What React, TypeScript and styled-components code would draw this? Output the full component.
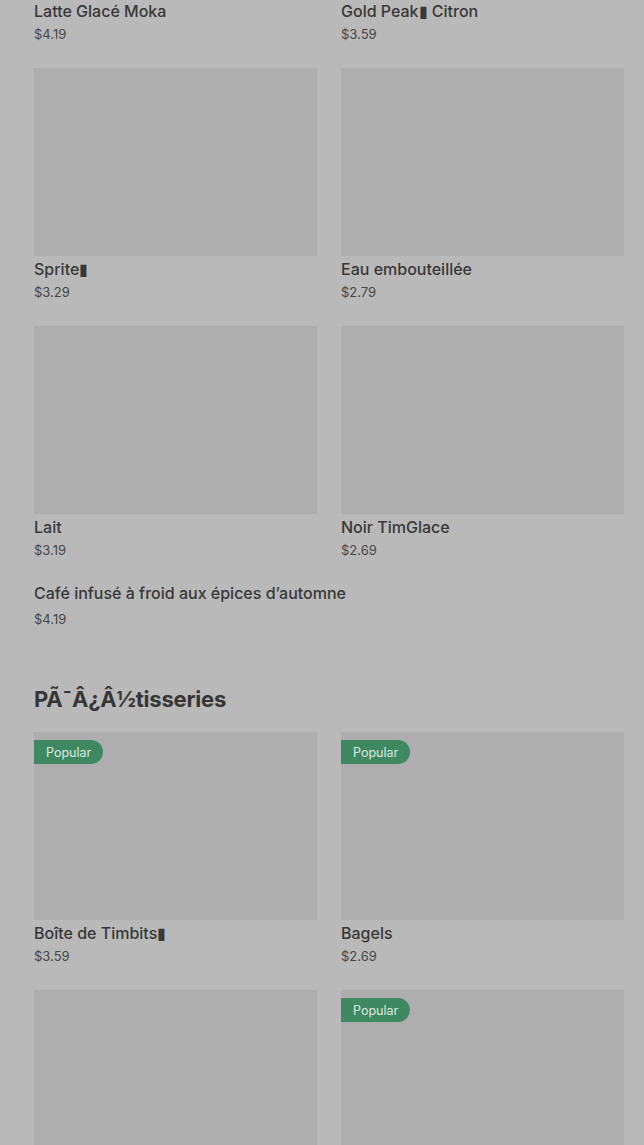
import styled, { createGlobalStyle } from "styled-components";

interface MenuItem {
  name: string;
  price: string;
  image?: boolean;
  popular?: boolean;
}

const drinks: MenuItem[] = [
  { name: "Latte Glacé Moka", price: "$4.19", image: true },
  { name: "Gold Peak▮ Citron", price: "$3.59", image: true },
  { name: "Sprite▮", price: "$3.29", image: true },
  { name: "Eau embouteillée", price: "$2.79", image: true },
  { name: "Lait", price: "$3.19", image: true },
  { name: "Noir TimGlace", price: "$2.69", image: true },
  { name: "Café infusé à froid aux épices d’automne", price: "$4.19" },
];

const pastries: MenuItem[] = [
  { name: "Boîte de Timbits▮", price: "$3.59", image: true, popular: true },
  { name: "Bagels", price: "$2.69", image: true, popular: true },
  { name: "Muffins", price: "$2.19", image: true },
  { name: "Beignes", price: "$1.79", image: true, popular: true },
];

const App = () => {
  return (
    <>
      <GlobalStyle />
      <Page>
        <Grid>
          {drinks.map((item) => (
            <Card key={item.name} item={item} />
          ))}
        </Grid>
        <SectionTitle>PÃ¯Â¿Â½tisseries</SectionTitle>
        <Grid>
          {pastries.map((item) => (
            <Card key={item.name} item={item} />
          ))}
        </Grid>
      </Page>
    </>
  );
};

const Card = ({ item }: { item: MenuItem }) => (
  <CardBox>
    {item.image && (
      <Thumb>{item.popular && <Badge>Popular</Badge>}</Thumb>
    )}
    <ItemName $noImage={!item.image}>{item.name}</ItemName>
    <Price $noImage={!item.image}>{item.price}</Price>
  </CardBox>
);

export default App;

const GlobalStyle = createGlobalStyle`
  html, body {
    margin: 0;
    padding: 0;
    background: #b9b9b9;
    overflow: hidden;
  }
  body {
    font-family: Inter, "Liberation Sans", sans-serif;
  }
`;

const Page = styled.div`
  margin-top: -190px;
  padding: 0 20px 40px 34px;
  background: #b9b9b9;
`;

const Grid = styled.div`
  display: grid;
  grid-template-columns: repeat(2, 1fr);
  column-gap: 24px;
  row-gap: 25px;
`;

const CardBox = styled.div`
  display: flex;
  flex-direction: column;
  min-width: 0;
`;

const Thumb = styled.div`
  position: relative;
  height: 188px;
  background: #aeaeae;
`;

const Badge = styled.span`
  position: absolute;
  top: 8px;
  left: 0;
  height: 24px;
  padding: 0 12px;
  display: flex;
  align-items: center;
  background: #3e8961;
  color: #dfeae3;
  font-size: 12.5px;
  border-radius: 0 12px 12px 0;
`;

const ItemName = styled.div<{ $noImage?: boolean }>`
  margin-top: ${(p) => (p.$noImage ? "-1px" : "3px")};
  font-size: 16px;
  line-height: 20px;
  font-weight: 500;
  color: #383838;
  white-space: nowrap;
`;

const Price = styled.div<{ $noImage?: boolean }>`
  margin-top: ${(p) => (p.$noImage ? "7px" : "4px")};
  font-size: 13px;
  line-height: 18px;
  color: #474747;
`;

const SectionTitle = styled.h2`
  margin: 57px 0 19px;
  font-size: 22px;
  line-height: 28px;
  font-weight: 700;
  letter-spacing: -0.2px;
  color: #363636;
`;
